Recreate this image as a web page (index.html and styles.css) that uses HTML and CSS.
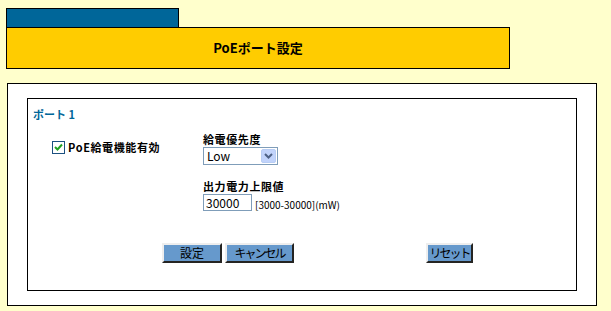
FILE: index.html
```html
<!DOCTYPE html>
<html>
<head>
    <meta charset="utf-8">
    <title>PoEポート設定</title>
    <link rel="stylesheet" href="styles.css">
</head>
<body>
    <div class="tab"></div>
    <div class="header">PoEポート設定</div>
    <div class="panel">
        <div class="inner">
            <div class="port-title">ポート 1</div>
            <div class="form-grid">
                <div class="left-col">
                    <label class="check-row">
                        <span class="checkbox">
                            <svg width="11" height="11" viewBox="0 0 11 11">
                                <path d="M2 5 L4.5 7.5 L9 2.5" fill="none" stroke="#21a121" stroke-width="2"/>
                            </svg>
                        </span>
                        <span class="field-label">PoE給電機能有効</span>
                    </label>
                </div>
                <div class="right-col">
                    <div class="field-label">給電優先度</div>
                    <div class="select-box">
                        <span class="select-value">Low</span>
                        <span class="select-arrow">
                            <svg width="9" height="6" viewBox="0 0 9 6">
                                <path d="M1 1 L4.5 4.5 L8 1" fill="none" stroke="#4d6185" stroke-width="2"/>
                            </svg>
                        </span>
                    </div>
                    <div class="field-label second">出力電力上限値</div>
                    <div class="input-row">
                        <input class="text-input" type="text" value="30000">
                        <span class="range-note">[3000-30000](mW)</span>
                    </div>
                </div>
            </div>
            <div class="button-row">
                <button class="btn btn-set">設定</button>
                <button class="btn btn-cancel">キャンセル</button>
                <button class="btn btn-reset">リセット</button>
            </div>
        </div>
    </div>
</body>
</html>
```

FILE: styles.css
```css
body {
    margin: 0;
    padding: 8px 0 0 6px;
    background-color: #ffffcc;
    font-family: "Noto Sans CJK JP", "DejaVu Sans", sans-serif;
    color: #000;
}
.tab {
    width: 173px;
    height: 19px;
    box-sizing: border-box;
    background-color: #006699;
    border: 1px solid #000;
    border-bottom: none;
}
.header {
    width: 504px;
    height: 42px;
    box-sizing: border-box;
    background-color: #ffcc00;
    border: 1px solid #000;
    text-align: center;
    line-height: 40px;
    font-size: 13px;
    font-weight: bold;
}
.panel {
    margin: 14px 0 0 1px;
    width: 590px;
    height: 223px;
    box-sizing: border-box;
    background-color: #fff;
    border: 1px solid #000;
    padding: 14px 19px;
}
.inner {
    width: 550px;
    height: 193px;
    box-sizing: border-box;
    border: 1px solid #000;
}
.port-title {
    padding: 8px 0 0 5px;
    line-height: 14px;
    font-size: 11px;
    font-weight: bold;
    color: #006699;
}
.form-grid {
    display: grid;
    grid-template-columns: 151px 1fr;
    margin: 11px 0 0 24px;
}
.left-col {
    padding-top: 8px;
}
.check-row {
    display: flex;
    align-items: center;
    gap: 3px;
}
.checkbox {
    width: 11px;
    height: 11px;
    border: 1px solid #1c5180;
    background-color: #fff;
    display: flex;
}
.field-label {
    font-size: 11px;
    font-weight: bold;
    line-height: 15px;
    letter-spacing: 0.6px;
}
.field-label.second {
    margin-top: 14px;
}
.select-box {
    position: relative;
    width: 75px;
    height: 18px;
    box-sizing: border-box;
    border: 1px solid #7f9db9;
    background-color: #fff;
}
.select-value {
    display: block;
    padding-left: 3px;
    line-height: 16px;
    font-size: 12px;
}
.select-arrow {
    position: absolute;
    top: 1px;
    right: 1px;
    width: 15px;
    height: 14px;
    background-color: #c1d3fb;
    border: 1px solid #b8cdf4;
    box-sizing: border-box;
    display: flex;
    align-items: center;
    justify-content: center;
    border-radius: 2px;
}
.input-row {
    display: flex;
    align-items: flex-end;
    gap: 3px;
}
.text-input {
    width: 49px;
    height: 17px;
    box-sizing: border-box;
    border: 1px solid #7f9db9;
    padding: 0 2px;
    font-family: "Noto Sans CJK JP", "DejaVu Sans", sans-serif;
    font-size: 12px;
    line-height: 15px;
    margin: 0;
}
.range-note {
    font-size: 10px;
    line-height: 13px;
}
.button-row {
    display: flex;
    margin: 32px 0 0 134px;
}
.btn {
    height: 20px;
    box-sizing: border-box;
    background-color: #6699cc;
    border: 2px outset #d4d0c8;
    border-color: #eeeeee #7a766e #7a766e #eeeeee;
    font-family: "Noto Sans CJK JP", "DejaVu Sans", sans-serif;
    font-size: 12px;
    line-height: 14px;
    padding: 0;
    color: #000;
}
.btn-set {
    width: 60px;
}
.btn-cancel {
    width: 69px;
    margin-left: 3px;
    letter-spacing: -2px;
}
.btn-reset {
    width: 47px;
    margin-left: 132px;
    letter-spacing: -2px;
}
```
